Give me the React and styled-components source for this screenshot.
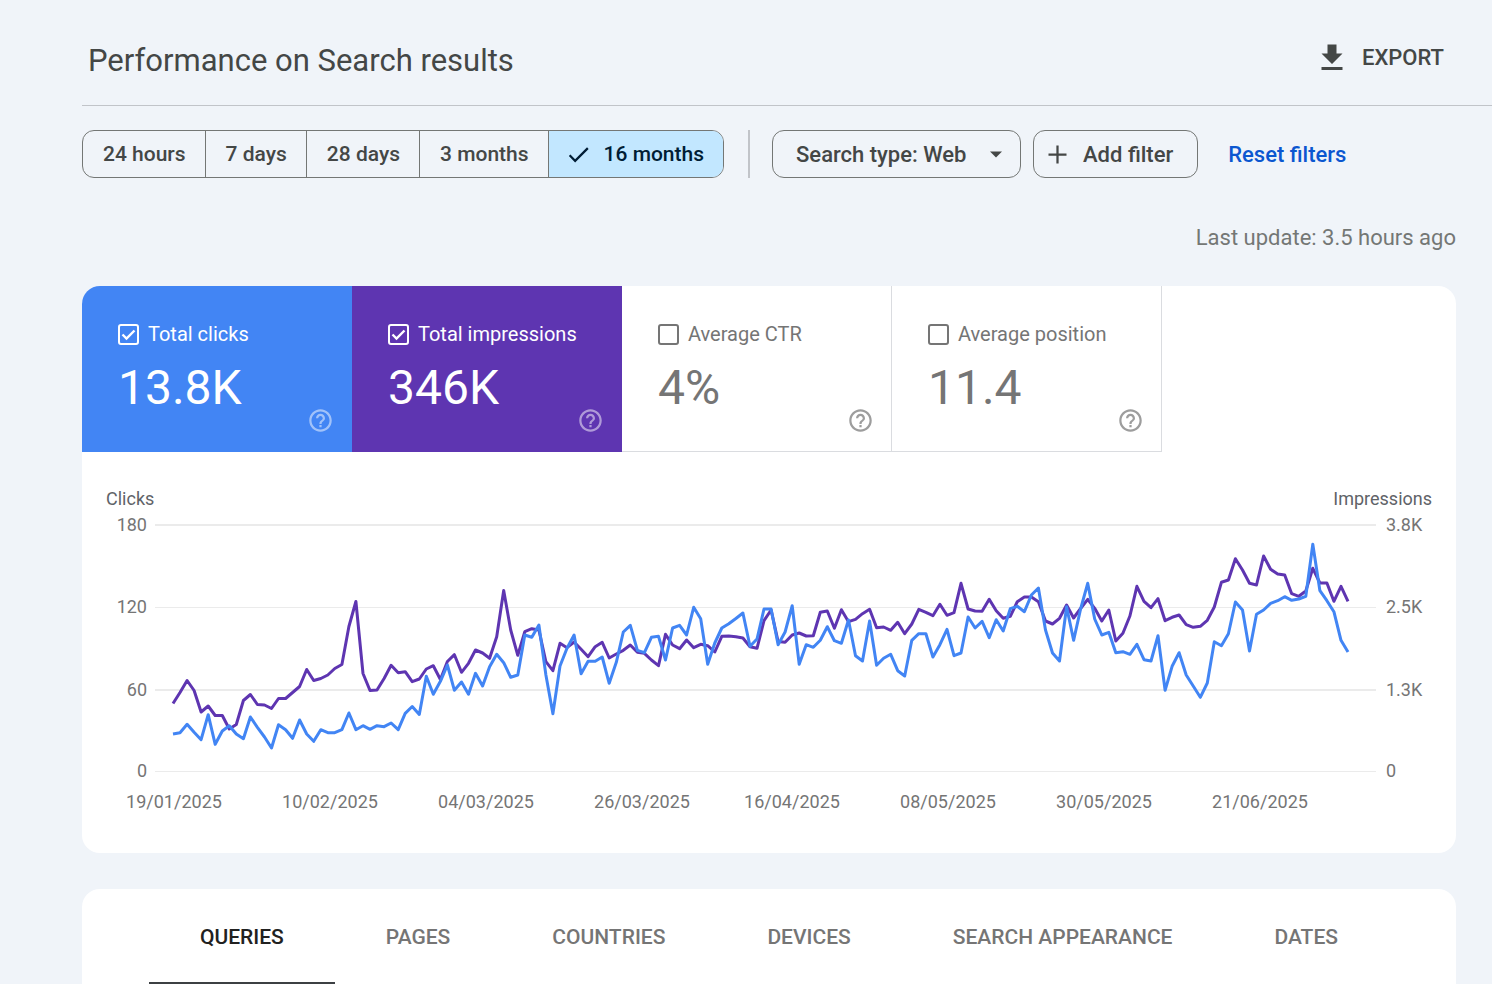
import React, { useState } from 'react'
import styled, { createGlobalStyle } from 'styled-components'


const GlobalStyle = createGlobalStyle`
    body{
        margin:0;
        background:#f0f4f9;
        color:#444746;
        font-family:Roboto, "Liberation Sans", sans-serif;
    }
    *{
        box-sizing:border-box;
    }
    button, select{
        font-family:inherit;
        color:inherit;
        background:none;
        border:0;
        cursor:pointer;
    }
`
const Page = styled.main`
    padding-left:82px;
`
const Header = styled.header`
    display:flex;
    align-items:center;
    justify-content:space-between;
    height:106px;
    padding:16px 48px 0 6px;
    border-bottom:1px solid #c1c4c9;
`
const Title = styled.h1`
    margin:0;
    font-size:31px;
    line-height:36px;
    font-weight:400;
`
const Export = styled.button`
    display:flex;
    align-items:center;
    gap:12px;
    padding:0 0 6px;
    font-size:22px;
    line-height:36px;
    font-weight:500;
`
const Filters = styled.div`
    display:flex;
    align-items:center;
    gap:12px;
    padding:24px 36px 0 0;
`
const Ranges = styled.div`
    display:flex;
    height:48px;
    border:1px solid #747775;
    border-radius:12px;
    overflow:hidden;
`
const Range = styled.button`
    display:flex;
    align-items:center;
    gap:12px;
    padding:0 19px 0 ${({ $active }) => ($active ? '16px' : '20px')};
    font-size:21px;
    font-weight:500;
    white-space:nowrap;
    color:${({ $active }) => ($active ? '#001d35' : '#444746')};
    background:${({ $active }) => ($active ? '#c2e7ff' : 'transparent')};
    & + &{
        border-left:1px solid #747775;
    }
`
const Divider = styled.span`
    width:2px;
    height:48px;
    margin:0 10px 0 12px;
    background:#c1c4c9;
`
const SelectBox = styled.label`
    display:flex;
    align-items:center;
    height:48px;
    border:1px solid #747775;
    border-radius:12px;
    svg{
        margin:0 12px 0 -36px;
        pointer-events:none;
    }
`
const Select = styled.select`
    height:46px;
    padding:0 53px 0 23px;
    appearance:none;
    font-size:22px;
    font-weight:500;
`
const AddFilter = styled.button`
    display:flex;
    align-items:center;
    gap:12px;
    height:48px;
    padding:0 24px 0 10px;
    border:1px solid #747775;
    border-radius:12px;
    font-size:22px;
    font-weight:500;
    white-space:nowrap;
`
const Reset = styled.button`
    padding:0 18px;
    font-size:22px;
    font-weight:500;
    white-space:nowrap;
    color:#0b57d0;
`
const Updated = styled.p`
    margin:0;
    padding:42px 36px 30px 0;
    font-size:22px;
    line-height:36px;
    text-align:right;
    color:#747775;
`
const Card = styled.section`
    margin:0 36px 36px 0;
    border-radius:18px;
    background:#fff;
    overflow:hidden;
`
const Metrics = styled.div`
    display:flex;
`
const Metric = styled.div`
    display:flex;
    flex-direction:column;
    width:270px;
    height:166px;
    padding:35px 18px 18px 36px;
    color:${({ $color }) => ($color ? '#fff' : '#757575')};
    background:${({ $color }) => $color || '#fff'};
    box-shadow:${({ $color }) => ($color ? 'none' : 'inset -1px -1px #dadce0')};
`
const MetricLabel = styled.label`
    display:flex;
    align-items:center;
    gap:9px;
    font-size:20px;
    line-height:26px;
    white-space:nowrap;
`
const Box = styled.span`
    display:grid;
    width:21px;
    height:21px;
    input, svg{
        grid-area:1 / 1;
        width:21px;
        height:21px;
        margin:0;
    }
    input{
        appearance:none;
        color:inherit;
        border:2px solid currentColor;
        border-radius:3px;
    }
    svg{
        pointer-events:none;
    }
`
const MetricBody = styled.div`
    display:flex;
    flex:1;
    justify-content:space-between;
    padding-top:13px;
`
const Value = styled.span`
    font-size:48px;
    line-height:56px;
`
const Help = styled.button`
    align-self:flex-end;
    height:27px;
    padding:0;
    opacity:${({ $dim }) => ($dim ? '0.5' : '0.7')};
`
const Chart = styled.svg`
    display:block;
    width:100%;
    font-size:18px;
    fill:#757575;
`
const AxisTitle = styled.text`
    fill:#5f6368;
`
const Line = styled.polyline`
    fill:none;
    stroke:${({ $color }) => $color};
    stroke-width:3;
    stroke-linejoin:round;
`
const TabsCard = styled(Card)`
    margin-bottom:0;
    border-radius:18px 18px 0 0;
`
const Tabs = styled.div`
    display:flex;
    justify-content:center;
`
const Tab = styled.button`
    height:95px;
    padding:0 51px;
    font-size:21px;
    font-weight:500;
    white-space:nowrap;
    color:${({ $active }) => ($active ? '#212121' : '#757575')};
    box-shadow:${({ $active }) => ($active ? 'inset 0 -2px #3c4043' : 'none')};
`

const ranges = ['24 hours', '7 days', '28 days', '3 months', '16 months']
const tabs = ['QUERIES', 'PAGES', 'COUNTRIES', 'DEVICES', 'SEARCH APPEARANCE', 'DATES']
const metrics = [
    { label: 'Total clicks', value: '13.8K', color: '#4285f4' },
    { label: 'Total impressions', value: '346K', color: '#5e35b1' },
    { label: 'Average CTR', value: '4%' },
    { label: 'Average position', value: '11.4' },
]
const grid = [
    { y: 525, left: '180', right: '3.8K', weight: 2 },
    { y: 607, left: '120', right: '2.5K', weight: 1 },
    { y: 690, left: '60', right: '1.3K', weight: 2 },
    { y: 771, left: '0', right: '0', weight: 1 },
]
const dates = [
    [92, '19/01/2025'], [248, '10/02/2025'], [404, '04/03/2025'], [560, '26/03/2025'],
    [710, '16/04/2025'], [866, '08/05/2025'], [1022, '30/05/2025'], [1178, '21/06/2025'],
]

// one y per day
const impressions = [
    703.5, 692.5, 680.5, 690.5, 712, 706, 715.5, 715.5, 729, 724.5, 700.5, 694.5, 704.5, 705, 708.5, 698.5,
    698.5, 692.5, 686.5, 669.5, 680.5, 678.5, 675, 668.5, 664.5, 626.5, 601.5, 673.5, 690.5, 690, 678.5, 665.3,
    672.7, 671.7, 681.7, 679, 669, 665.7, 679.5, 661.5, 654.7, 672.3, 663.3, 650, 653, 658.3, 636.7, 590.5,
    630, 655.3, 631.7, 628.7, 630, 661.7, 670.7, 643.3, 647.7, 642, 649.3, 656.7, 646.7, 642.3, 658, 654,
    650.3, 645, 652.3, 653.3, 660, 665.7, 634.3, 645, 648.7, 640, 647.7, 644.3, 645.7, 652, 636.3, 636,
    636.7, 638, 646.7, 648.3, 620.7, 610, 641.5, 642.3, 635, 633, 636, 635.7, 612.3, 611, 628.3, 609.7,
    621.7, 619.3, 613.7, 609.3, 627.7, 627, 630.3, 622.3, 633.7, 624, 609.3, 612.3, 615.7, 604.3, 615.3, 612.7,
    583.3, 609, 611, 611.3, 599.3, 610.7, 618.3, 616.3, 601.7, 597, 597, 601.7, 621, 624, 618.3, 605,
    618, 608.5, 599.3, 608.3, 621, 610, 641, 633.3, 616, 586.3, 601.3, 607.7, 598.7, 620.7, 617.3, 615,
    624.7, 627.3, 626.3, 620.3, 607, 582.3, 580, 558.7, 570, 583.3, 585, 556, 569.3, 574, 575, 593.7,
    596.3, 591, 568.3, 583, 583, 601.3, 586.3, 601.3,
]
const clicks = [
    734, 732.7, 724.3, 732.3, 739.7, 714.7, 744.3, 731, 725.7, 734, 738.7, 717, 727.3, 737, 748, 724.7,
    729.7, 738.3, 720, 734, 741.3, 729.7, 732.7, 732.7, 729.7, 713, 729.7, 725.7, 729.3, 725.7, 726.7, 723,
    729.7, 713.3, 706.5, 714.5, 676.3, 694.3, 681.3, 665, 690.3, 682, 694.3, 673.3, 686, 666.7, 654.3, 662.7,
    677.3, 675, 635, 637.3, 625, 675, 713.7, 666, 648.3, 635, 673.7, 661.3, 661.3, 657, 683.3, 662.3,
    632, 625.3, 650.3, 652.7, 637.3, 636.3, 660, 628, 625.3, 635, 607.3, 618.7, 664.3, 643, 628, 623.7,
    618.5, 613, 646.3, 639, 609, 609, 644.7, 632, 605.7, 664.3, 644.7, 647.3, 640.3, 626.7, 640.7, 643.3,
    620, 655.7, 661, 621, 665.3, 658.3, 654.3, 670.7, 676, 640.3, 633.7, 633.7, 657, 644.7, 629.3, 655.7,
    653, 617, 628, 621.3, 637.7, 619.7, 631, 608.7, 606.3, 611.7, 595, 588, 630, 653, 661, 606.7,
    640.3, 609, 583.3, 619, 635, 632.3, 652.7, 651.7, 654.3, 644.3, 659.7, 661, 635.7, 690.3, 666.3, 652.7,
    675, 686, 697.3, 683, 641.7, 645.7, 633.7, 602, 610, 651, 614.3, 610, 603.3, 600.7, 596.7, 600.3,
    599, 596.3, 544.3, 590.7, 600.7, 611.7, 640.3, 652,
]
const toPoints = (ys) => ys.map((y, i) => `${(91 + i * 7.036).toFixed(1)},${y}`).join(' ')

const MetricCard = ({ label, value, color }) => (
    <Metric $color={color}>
        <MetricLabel>
            <Box>
                <input type="checkbox" defaultChecked={!!color} />
                {color && (
                    <svg viewBox="0 0 21 21" fill="none" stroke="currentColor" strokeWidth="2.4">
                        <path d="M4.5 10.5l4 4 8-8" />
                    </svg>
                )}
            </Box>
            {label}
        </MetricLabel>
        <MetricBody>
            <Value>{value}</Value>
            <Help $dim={!!color} aria-label={`About ${label}`}>
                <svg width="27" height="27" viewBox="0 0 24 24" fill="currentColor">
                    <path d="M11 18h2v-2h-2v2zm1-16C6.48 2 2 6.48 2 12s4.48 10 10 10 10-4.48 10-10S17.52 2 12 2zm0 18c-4.41 0-8-3.59-8-8s3.59-8 8-8 8 3.59 8 8-3.59 8-8 8zm0-14c-2.21 0-4 1.79-4 4h2c0-1.1.9-2 2-2s2 .9 2 2c0 2-3 1.75-3 5h2c0-2.25 3-2.5 3-5 0-2.21-1.79-4-4-4z" />
                </svg>
            </Help>
        </MetricBody>
    </Metric>
)

export default () => {
    const [range, setRange] = useState('16 months')
    const [tab, setTab] = useState('QUERIES')

    return (
        <Page>
            <GlobalStyle />
            <Header>
                <Title>Performance on Search results</Title>
                <Export>
                    <svg width="36" height="36" viewBox="0 0 24 24" fill="currentColor">
                        <path d="M19 9h-4V3H9v6H5l7 7 7-7zM5 18v2h14v-2H5z" />
                    </svg>
                    EXPORT
                </Export>
            </Header>
            <Filters>
                <Ranges>
                    {ranges.map((name) => (
                        <Range key={name} $active={name === range} onClick={() => setRange(name)}>
                            {name === range && (
                                <svg width="27" height="27" viewBox="0 0 24 24" fill="currentColor">
                                    <path d="M9 16.17L4.83 12l-1.42 1.41L9 19 21 7l-1.41-1.41z" />
                                </svg>
                            )}
                            {name}
                        </Range>
                    ))}
                </Ranges>
                <Divider />
                <SelectBox>
                    <Select aria-label="Search type">
                        <option>Search type: Web</option>
                    </Select>
                    <svg width="24" height="24" viewBox="0 0 24 24" fill="currentColor">
                        <path d="M6 9.5l6 6 6-6z" />
                    </svg>
                </SelectBox>
                <AddFilter>
                    <svg width="27" height="27" viewBox="0 0 24 24" fill="currentColor">
                        <path d="M20 13h-7v7h-2v-7H4v-2h7V4h2v7h7v2z" />
                    </svg>
                    Add filter
                </AddFilter>
                <Reset>Reset filters</Reset>
            </Filters>
            <Updated>Last update: 3.5 hours ago</Updated>
            <Card>
                <Metrics>
                    {metrics.map((metric) => <MetricCard key={metric.label} {...metric} />)}
                </Metrics>
                <Chart viewBox="0 452 1374 401">
                    <AxisTitle x="24" y="505">Clicks</AxisTitle>
                    <AxisTitle x="1350" y="505" textAnchor="end">Impressions</AxisTitle>
                    {grid.map(({ y, left, right, weight }) => (
                        <g key={y}>
                            <rect x="73" y={weight === 2 ? y - 1 : y} width="1221" height={weight} fill="#ebebeb" />
                            <text x="65" y={y + 6} textAnchor="end">{left}</text>
                            <text x="1304" y={y + 6}>{right}</text>
                        </g>
                    ))}
                    <Line $color="#5e35b1" points={toPoints(impressions)} />
                    <Line $color="#4285f4" points={toPoints(clicks)} />
                    {dates.map(([x, date]) => (
                        <text key={date} x={x} y="808" textAnchor="middle">{date}</text>
                    ))}
                </Chart>
            </Card>
            <TabsCard>
                <Tabs role="tablist">
                    {tabs.map((name) => (
                        <Tab key={name} role="tab" aria-selected={name === tab} $active={name === tab} onClick={() => setTab(name)}>
                            {name}
                        </Tab>
                    ))}
                </Tabs>
            </TabsCard>
        </Page>
    )
}
